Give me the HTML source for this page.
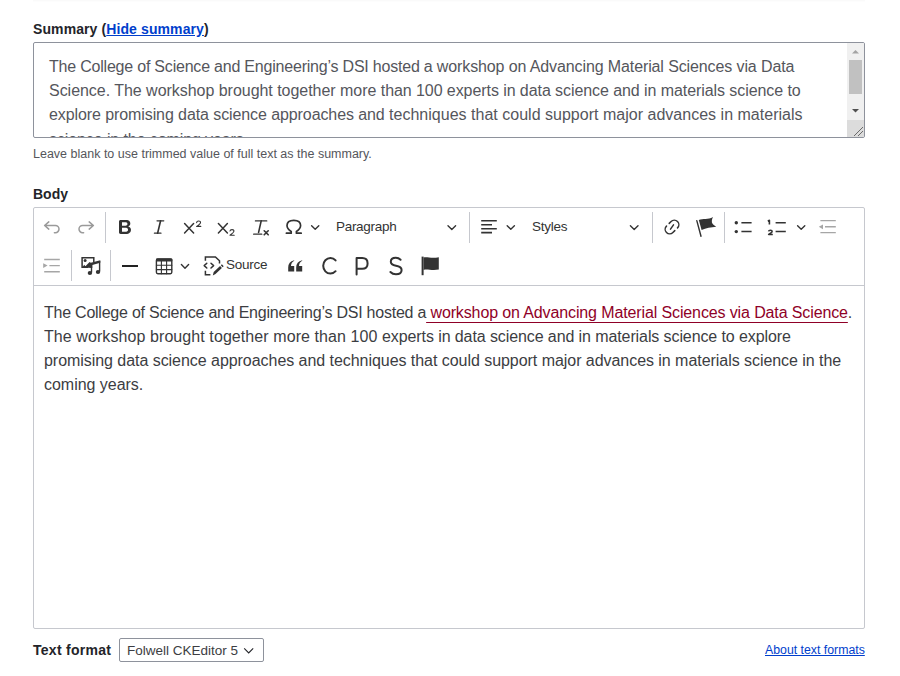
<!DOCTYPE html>
<html><head><meta charset="utf-8">
<style>
html,body{margin:0;padding:0;background:#fff;width:900px;height:676px;overflow:hidden;position:relative;font-family:"Liberation Sans",sans-serif;color:#232429}
.a{position:absolute;white-space:nowrap}
.lbl{font-weight:bold;font-size:14px;line-height:16px;color:#232429}
.lnk{color:#003ecc;text-decoration:underline}
.ta{position:absolute;left:33px;top:42px;width:830px;height:94px;border:1px solid #8e929c;border-radius:2px;overflow:hidden;background:#fff}
.tl{position:absolute;left:15px;font-size:16px;line-height:24px;color:#55565c;white-space:nowrap}
.sb{position:absolute;left:813px;top:0;width:17px;height:77px;background:#f0f0f0}
.rs{position:absolute;left:813px;top:77px;width:17px;height:17px;background:#dcdcdc}
.desc{font-size:12.5px;line-height:15px;color:#55565b}
.ed{position:absolute;left:33px;top:207px;width:830px;height:420px;border:1px solid #c6c8ce;border-radius:2px;background:#fff}
.tb{position:absolute;left:0;top:0;width:830px;height:77px;border-bottom:1px solid #c6c8ce}
.sep{position:absolute;width:1px;background:#c6c8ce}
.ic{position:absolute;width:20px;height:20px}
.ic svg{display:block}
.tt{position:absolute;font-size:13px;line-height:15px;color:#333;white-space:nowrap}
.bl{position:absolute;left:10px;font-size:16px;line-height:24px;color:#3c3d42;white-space:nowrap}
.bl a{color:#8f0027;text-decoration:underline;text-underline-offset:4px}
.sel{position:absolute;left:119px;top:638px;width:143px;height:22px;border:1px solid #8e929c;border-radius:2px;background:#fff}
</style></head><body>
<div class="a" style="left:33px;top:0;width:832px;height:1px;background:#fafafa"></div><div class="a" style="left:33px;top:1px;width:832px;height:1px;background:#fdfdfd"></div>

<div class="a lbl" style="left:33px;top:21px;letter-spacing:0.1px">Summary (<span class="lnk">Hide summary</span>)</div>

<div class="ta">
  <div class="tl" style="top:12px;letter-spacing:-0.209px">The College of Science and Engineering’s DSI hosted a <span style="letter-spacing:-0.111px">workshop on Advancing Material Sciences via Data</span></div>
  <div class="tl" style="top:36px;letter-spacing:-0.033px">Science. The workshop brought together more <span style="letter-spacing:-0.073px">than 100 experts in data science and in materials science to</span></div>
  <div class="tl" style="top:60px;letter-spacing:-0.091px">explore promising data science approaches and <span style="letter-spacing:0.015px">techniques that could support major advances in materials</span></div>
  <div class="tl" style="top:85px;letter-spacing:-0.1px">science in the coming years.</div>
  <div class="sb">
    <svg width="17" height="77" style="position:absolute;left:0;top:0">
      <path d="M5 10.5 L8.5 7 L12 10.5 Z" fill="#a3a3a3"/>
      <rect x="2" y="17" width="13" height="34" fill="#c1c1c1"/>
      <path d="M5 66 L8.5 69.5 L12 66 Z" fill="#505050"/>
    </svg>
  </div>
  <div class="rs">
    <svg width="17" height="17" style="position:absolute;left:0;top:0">
      <path d="M7 16 L16 7 M11 16 L16 11" stroke="#6a6a6a" stroke-width="1"/>
    </svg>
  </div>
</div>

<div class="a desc" style="left:33px;top:147px">Leave blank to use trimmed value of full text as the summary.</div>

<div class="a lbl" style="left:33px;top:186px">Body</div>

<div class="ed">
  <div class="tb">
  </div>
  <div class="bl" style="top:93px;letter-spacing:-0.236px">The College of Science and Engineering’s DSI hosted a<a style="letter-spacing:-0.122px"> workshop on Advancing Material Sciences via Data Science</a>.</div>
  <div class="bl" style="top:117px;letter-spacing:0.082px">The workshop brought together more than 100 <span style="letter-spacing:-0.096px">experts in data science and in materials science to explore</span></div>
  <div class="bl" style="top:141px;letter-spacing:-0.046px">promising data science approaches and techniques that could support major advances in materials science in the</div>
  <div class="bl" style="top:165px;letter-spacing:-0.025px">coming years.</div>
</div>


<svg class="a" style="left:0;top:0" width="900" height="300" viewBox="0 0 900 300">
 <g fill="none" stroke-linecap="round" stroke-linejoin="round">
  <!-- undo / redo (disabled) -->
  <path d="M48.8 221.9 L44.6 225.5 L48.8 229.1 M44.6 225.5 H55.4 A3.6 3.6 0 0 1 55.4 232.7 H54.4" stroke="#9a9a9a" stroke-width="1.5"/>
  <path transform="translate(138,0) scale(-1,1)" d="M48.8 221.9 L44.6 225.5 L48.8 229.1 M44.6 225.5 H55.4 A3.6 3.6 0 0 1 55.4 232.7 H54.4" stroke="#9a9a9a" stroke-width="1.5"/>
  <!-- italic -->
  <path d="M157 220.8 H163.8 M154.4 233.2 H161" stroke="#333" stroke-width="1.2"/><path d="M160.6 220.8 L157.6 233.2" stroke="#333" stroke-width="1.6"/>
  <!-- superscript -->
  <path d="M184.6 223.6 L193.6 233 M193.6 223.6 L184.6 233" stroke="#333" stroke-width="1.5"/>
  <path d="M196.6 222.6 Q196.8 221 198.6 221 Q200.6 221 200.5 222.7 Q200.4 224 196.6 226.4 H200.8" stroke="#333" stroke-width="1.1"/>
  <!-- subscript -->
  <path d="M218.4 223.6 L227.4 233 M227.4 223.6 L218.4 233" stroke="#333" stroke-width="1.5"/>
  <path d="M230 231 Q230.2 229.6 232 229.6 Q234 229.6 233.9 231.3 Q233.8 232.6 230 235.2 H234.2" stroke="#333" stroke-width="1.1"/>
  <!-- remove format -->
  <path d="M255.4 220.9 H266.8 M253.6 234.2 H261.8" stroke="#333" stroke-width="1.2"/><path d="M261.2 220.9 L258.6 232.4" stroke="#333" stroke-width="1.6"/>
  <path d="M264.2 230.8 L268.2 234.8 M268.2 230.8 L264.2 234.8" stroke="#333" stroke-width="1.6"/>
  <!-- omega -->
  <path d="M286.4 233.2 H291.2 V231.4 Q287 229 287 225.6 Q287 220.3 293.8 220.3 Q300.6 220.3 300.6 225.6 Q300.6 229 296.4 231.4 V233.2 H301.2" stroke="#333" stroke-width="1.7"/>
  <!-- chevrons -->
  <path d="M311.6 225.8 L315.2 229.2 L318.8 225.8" stroke="#333" stroke-width="1.4"/>
  <path d="M448 225.8 L451.8 229.4 L455.6 225.8" stroke="#333" stroke-width="1.4"/>
  <path d="M507.2 225.8 L510.8 229.2 L514.4 225.8" stroke="#333" stroke-width="1.4"/>
  <path d="M630.4 225.8 L634.2 229.4 L638 225.8" stroke="#333" stroke-width="1.4"/>
  <path d="M797.6 225.8 L801.2 229.2 L804.8 225.8" stroke="#333" stroke-width="1.4"/>
  <path d="M181.4 264.6 L185 268.2 L188.6 264.6" stroke="#333" stroke-width="1.4"/>
  <!-- align -->
  <path d="M481.2 220.8 H496.8 M481.2 224.7 H492 M481.2 228.7 H496.8 M481.2 232.6 H492" stroke="#333" stroke-width="1.6" stroke-linecap="butt"/>
  <!-- link -->
  <path d="M669.2 223.4 L671.1 221.5 A4.5 4.5 0 0 1 677.5 227.9 M674.8 230.6 L672.9 232.5 A4.5 4.5 0 0 1 666.5 226.1 M670.5 229.2 L673.5 224.8" stroke="#333" stroke-width="1.5"/>
  <!-- flag 1 pole -->
  <path d="M696.8 220.6 L701 236.2" stroke="#333" stroke-width="1.4"/>
  <!-- bulleted list lines -->
  <path d="M741.4 222.8 H751.6 M741.4 231.6 H751.6" stroke="#333" stroke-width="1.5" stroke-linecap="butt"/>
  <!-- numbered list lines -->
  <path d="M775.6 222.7 H785.8 M775.6 231.4 H785.8" stroke="#333" stroke-width="1.5" stroke-linecap="butt"/>
  <path d="M767.8 221.2 L769.4 220.3 V224.6" stroke="#333" stroke-width="1.6" stroke-linecap="butt"/>
  <path d="M768.5 231.4 Q768.7 230.2 770.4 230.2 Q772.2 230.2 772.1 231.7 Q772 232.6 768.6 234.4 H772.8" stroke="#333" stroke-width="1.5" stroke-linecap="butt"/>
  <!-- outdent (disabled) -->
  <path d="M820.4 220.6 H835.8 M825 226.8 H835.8 M820.4 232.6 H835.8" stroke="#a6a6a6" stroke-width="1.4" stroke-linecap="butt"/>
  <!-- indent (disabled) -->
  <path d="M44.2 259.5 H59.8 M49.4 265.6 H59.8 M44.2 271.7 H59.8" stroke="#a6a6a6" stroke-width="1.4" stroke-linecap="butt"/>
  <!-- media frame -->
  <path d="M93.8 262.2 V257.7 H82.1 V267.2 H88" stroke="#333" stroke-width="1.5" stroke-linecap="butt" stroke-linejoin="miter"/>
  <path d="M91.5 263.4 V272.4 M99.6 261 V271.6" stroke="#333" stroke-width="1.4" stroke-linecap="butt"/>
  <!-- hr -->
  <path d="M122 266 H138" stroke="#222" stroke-width="2" stroke-linecap="butt"/>
  <!-- table -->
  <rect x="156.4" y="259" width="15.4" height="14.7" rx="1.4" stroke="#333" stroke-width="1.4"/>
  <path d="M156.4 265.3 H171.8 M156.4 269.6 H171.8 M161.4 260.5 V273.7 M166.6 260.5 V273.7" stroke="#333" stroke-width="1.1"/>
  <!-- source icon -->
  <path d="M205.4 260.8 V256.9 H215.4 L219.5 260.8 V263.6 M205.4 270.8 V274.7 H210.4" stroke="#333" stroke-width="1.5" stroke-linecap="butt" stroke-linejoin="miter"/>
  <path d="M206.8 263.2 L204.2 265.6 L206.8 268 M211 263.2 L213.6 265.6 L211 268" stroke="#333" stroke-width="1.5"/>
  
  <!-- C P S -->
  <path d="M335.6 260.4 A7.2 7.8 0 1 0 335.6 271.2" stroke="#333" stroke-width="2"/>
  <path d="M356.6 274.4 V258 H362.2 Q367.6 258 367.6 263.4 Q367.6 268.8 362.2 268.8 H356.8" stroke="#333" stroke-width="2"/>
  <path d="M400.6 259.8 Q398.6 257.8 395.8 257.8 Q390.8 257.8 390.8 261.8 Q390.8 264.8 396 265.8 Q401.6 266.8 401.6 270 Q401.6 274.3 396 274.3 Q392.6 274.3 390.4 272" stroke="#333" stroke-width="2"/>
  <!-- flag 2 pole -->
  <path d="M422.6 256.6 V275.2" stroke="#333" stroke-width="2" stroke-linecap="butt"/>
 </g>
 <g fill="#333" stroke="none">
  <!-- bold -->
  <path transform="translate(115,217)" d="M10.187 17H5.773c-.637 0-1.092-.138-1.364-.415-.273-.277-.409-.718-.409-1.323V4.738c0-.617.14-1.062.419-1.332.279-.27.73-.406 1.354-.406h4.68c.69 0 1.288.041 1.793.124.506.083.96.242 1.36.478.341.197.644.447.906.75a3.262 3.262 0 0 1 .808 2.162c0 1.401-.722 2.426-2.167 3.075C15.05 10.175 16 11.315 16 13.01a3.756 3.756 0 0 1-2.296 3.504 6.1 6.1 0 0 1-1.517.377c-.571.073-1.238.11-2.001.11zm-.217-6.217H7v4.087h3.069c1.977 0 2.965-.69 2.965-2.072 0-.707-.256-1.22-.768-1.537-.512-.319-1.277-.478-2.296-.478zM7 5.13v3.619h2.606c.729 0 1.292-.067 1.69-.2a1.6 1.6 0 0 0 .91-.765c.165-.267.247-.566.247-.897 0-.707-.26-1.176-.778-1.409-.519-.232-1.31-.348-2.375-.348H7z"/>
  <!-- flag 1 body -->
  <path d="M698.8 219.9 C703 218.2 708 220.2 713 217 C711.8 219.5 711.4 221.8 712.4 223.6 C713.4 225 714.8 225.9 716.2 226.7 C711 227.6 706 227.6 701.6 230 Z"/>
  <!-- bullets -->
  <circle cx="736.3" cy="222.8" r="1.7"/>
  <circle cx="736.3" cy="231.6" r="1.7"/>
  <!-- outdent/indent triangles -->
  <path d="M818.8 226.8 L823 224.4 V229.2 Z" fill="#a6a6a6"/>
  <path d="M47.6 265.6 L43.2 263.2 V268 Z" fill="#a6a6a6"/>
  <!-- media -->
  <circle cx="85.1" cy="260.4" r="1.5"/>
  <path d="M83 267.6 V266.4 L84.2 264.8 L85.4 266.2 L89.6 262 L90.8 262.8 L100.3 260.2 V262.8 L92.3 265 V267.9 Z"/>
  <ellipse cx="89.9" cy="273" rx="2.2" ry="1.9"/>
  <ellipse cx="98" cy="272" rx="2.2" ry="1.9"/>
  <!-- table header -->
  <rect x="156" y="258.4" width="16.4" height="3" rx="1"/>
  <!-- quote -->
  <path d="M288.2 271.6 H294.2 V266 H291 Q291.2 262.4 294.2 260.8 V260.2 Q288.2 261.4 288.2 267.6 Z"/>
  <path d="M296.2 271.6 H302.2 V266 H299 Q299.2 262.4 302.2 260.8 V260.2 Q296.2 261.4 296.2 267.6 Z"/>
  <!-- pencil tip -->
  <path d="M212.8 275.6 L213.7 272.1 L220.1 266 L221.9 267.9 L215.5 273.9 Z"/><path d="M220.8 265.3 L221.9 264.3 L223.7 266.2 L222.6 267.2 Z"/>
  <!-- flag 2 body -->
  <path d="M423.6 257.4 C427 256.4 431 258.6 438.8 257.2 V269.6 C431 271 427 268.4 423.6 270 Z"/>
 </g>
 <!-- separators -->
 <g fill="#c6c8ce">
  <rect x="105" y="212" width="1" height="31"/>
  <rect x="469" y="212" width="1" height="31"/>
  <rect x="652" y="212" width="1" height="31"/>
  <rect x="724" y="212" width="1" height="31"/>
  <rect x="71" y="250" width="1" height="31"/>
  <rect x="110" y="250" width="1" height="31"/>
 </g>
</svg>
<div class="a" style="left:336px;top:219px;font-size:13.5px;line-height:15px;letter-spacing:-0.3px;color:#333">Paragraph</div>
<div class="a" style="left:532px;top:219px;font-size:13.5px;line-height:15px;letter-spacing:-0.25px;color:#333">Styles</div>
<div class="a" style="left:226px;top:257px;font-size:13.5px;line-height:15px;letter-spacing:-0.25px;color:#333">Source</div>

<div class="a lbl" style="left:33px;top:642px;letter-spacing:0.28px">Text format</div>
<div class="sel">
  <div class="a" style="left:7px;top:4px;font-size:13.5px;line-height:16px;color:#3c3d42">Folwell CKEditor 5</div>
  <svg width="12" height="8" style="position:absolute;left:123px;top:8px"><path d="M1.2 1.4 L5.7 5.9 L10.2 1.4" fill="none" stroke="#232429" stroke-width="1.1"/></svg>
</div>
<div class="a lnk" style="left:765px;top:643px;font-size:12.3px;line-height:15px">About text formats</div>

</body></html>
